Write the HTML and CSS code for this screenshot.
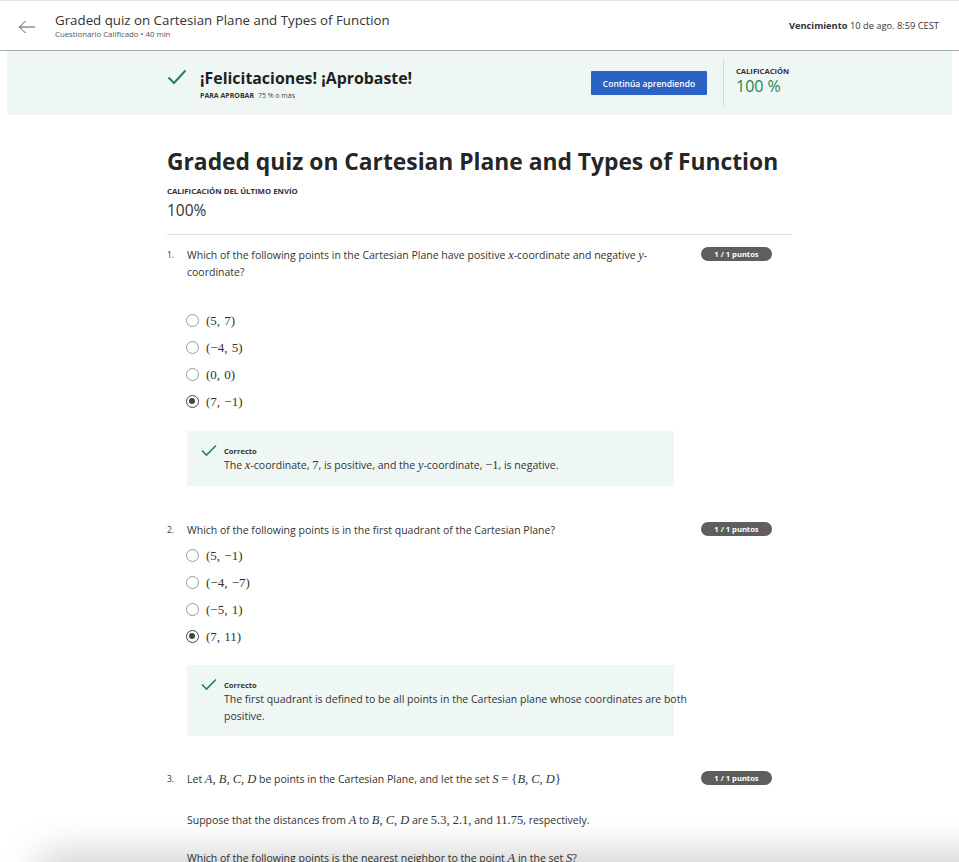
FILE: index.html
```html
<!DOCTYPE html>
<html lang="es">
<head>
<meta charset="utf-8">
<title>Graded quiz on Cartesian Plane and Types of Function</title>
<link rel="stylesheet" href="styles.css">
</head>
<body>
<header class="topbar">
  <svg class="back" width="18" height="14" viewBox="0 0 18 14"><path d="M17 7H1.5M7.5 1L1.5 7l6 6" fill="none" stroke="#555" stroke-width="1"/></svg>
  <div class="titles">
    <div class="t-main">Graded quiz on Cartesian Plane and Types of Function</div>
    <div class="t-sub">Cuestionario Calificado • 40 min</div>
  </div>
  <div class="due"><b>Vencimiento</b> 10 de ago. 8:59 CEST</div>
</header>

<section class="banner">
  <div class="banner-in">
    <svg class="bcheck" width="20" height="16" viewBox="0 0 20 16"><path d="M1.5 8.5l5.5 5.5L18.5 1.5" fill="none" stroke="#1f8354" stroke-width="2"/></svg>
    <div class="congrats">
      <div class="c-title">¡Felicitaciones! ¡Aprobaste!</div>
      <div class="c-sub"><b>PARA APROBAR</b> 75 % o más</div>
    </div>
    <button class="cta">Continúa aprendiendo</button>
    <div class="score">
      <div class="s-label">CALIFICACIÓN</div>
      <div class="s-val">100 %</div>
    </div>
  </div>
</section>

<main class="content">
  <h1 class="quiz-title">Graded quiz on Cartesian Plane and Types of Function</h1>
  <div class="last-label">CALIFICACIÓN DEL ÚLTIMO ENVÍO</div>
  <div class="last-val">100%</div>
  <hr class="rule">

  <div class="q q1">
    <div class="q-head">
      <span class="q-num">1.</span>
      <div class="q-text">Which of the following points in the Cartesian Plane have positive <i class="m">x</i>-coordinate and negative <i class="m">y</i>-<br>coordinate?</div>
      <span class="badge">1 / 1 puntos</span>
    </div>
    <ul class="opts opts1">
      <li><span class="radio"></span><span class="m">(5, 7)</span></li>
      <li><span class="radio"></span><span class="m">(−4, 5)</span></li>
      <li><span class="radio"></span><span class="m">(0, 0)</span></li>
      <li><span class="radio on"></span><span class="m">(7, −1)</span></li>
    </ul>
    <div class="fb">
      <svg class="fcheck" width="16" height="13" viewBox="0 0 16 13"><path d="M1 6.5l4.5 4.5L15 1.5" fill="none" stroke="#1f8354" stroke-width="1.6"/></svg>
      <div>
        <div class="fb-title">Correcto</div>
        <div class="fb-text">The <i class="m">x</i>-coordinate, <span class="m">7</span>, is positive, and the <i class="m">y</i>-coordinate, <span class="m">−1</span>, is negative.</div>
      </div>
    </div>
  </div>

  <div class="q q2">
    <div class="q-head">
      <span class="q-num">2.</span>
      <div class="q-text">Which of the following points is in the first quadrant of the Cartesian Plane?</div>
      <span class="badge">1 / 1 puntos</span>
    </div>
    <ul class="opts opts2">
      <li><span class="radio"></span><span class="m">(5, −1)</span></li>
      <li><span class="radio"></span><span class="m">(−4, −7)</span></li>
      <li><span class="radio"></span><span class="m">(−5, 1)</span></li>
      <li><span class="radio on"></span><span class="m">(7, 11)</span></li>
    </ul>
    <div class="fb">
      <svg class="fcheck" width="16" height="13" viewBox="0 0 16 13"><path d="M1 6.5l4.5 4.5L15 1.5" fill="none" stroke="#1f8354" stroke-width="1.6"/></svg>
      <div>
        <div class="fb-title">Correcto</div>
        <div class="fb-text wide">The first quadrant is defined to be all points in the Cartesian plane whose coordinates are both positive.</div>
      </div>
    </div>
  </div>

  <div class="q q3">
    <div class="q-head">
      <span class="q-num">3.</span>
      <div class="q-text">Let <i class="m">A</i><span class="m">, </span><i class="m">B</i><span class="m">, </span><i class="m">C</i><span class="m">, </span><i class="m">D</i> be points in the Cartesian Plane, and let the set <i class="m">S</i> <span class="m">= {</span><i class="m">B</i><span class="m">, </span><i class="m">C</i><span class="m">, </span><i class="m">D</i><span class="m">}</span></div>
      <span class="badge">1 / 1 puntos</span>
    </div>
    <p class="q-p">Suppose that the distances from <i class="m">A</i> to <i class="m">B</i><span class="m">, </span><i class="m">C</i><span class="m">, </span><i class="m">D</i> are <span class="m">5.3, 2.1,</span> and <span class="m">11.75</span>, respectively.</p>
    <p class="q-p">Which of the following points is the nearest neighbor to the point <i class="m">A</i> in the set <i class="m">S</i>?</p>
  </div>
</main>
<div class="footshade"></div>
</body>
</html>
```
FILE: styles.css
```css
* { box-sizing: border-box; }
body {
  margin: 0;
  font-family: "Open Sans", "Noto Sans", sans-serif;
  color: #1f1f1f;
  background: #fff;
  overflow: hidden;
  height: 862px;
}
.m { font-family: "Liberation Serif", "DejaVu Serif", serif; font-size: 12.5px; }
i.m { font-style: italic; }

.topbar {
  height: 51px;
  border-top: 1px solid #e3e3e3;
  border-bottom: 1px solid #ababab;
  display: flex;
  align-items: center;
  padding: 0 20px 0 18px;
}
.back { display: block; margin-top: 2px; }
.titles { margin-left: 19px; margin-top: -2px; }
.t-main { font-size: 13.3px; line-height: 18px; color: #333; }
.t-sub { font-size: 7.8px; line-height: 10px; color: #555; }
.due { margin-left: auto; font-size: 9.3px; color: #333; margin-top: -1px; }
.due b { font-weight: 700; }

.banner {
  margin: 0 7px;
  height: 64px;
  background: #eff7f4;
}
.banner-in {
  width: 625px;
  margin: 0 auto;
  height: 100%;
  display: flex;
  align-items: center;
}
.bcheck { margin-top: -13px; }
.congrats { margin-left: 13px; margin-top: 1px; }
.c-title { font-size: 15.9px; font-weight: 700; color: #1f1f1f; line-height: 20px; }
.c-sub { font-size: 7px; color: #444; margin-top: 3px; }
.c-sub b { font-weight: 700; color: #333; margin-right: 2px; }
.cta {
  margin-left: auto;
  width: 116px;
  height: 24px;
  background: #2a63c4;
  color: #fff;
  border: 0;
  border-radius: 1px;
  font-family: inherit;
  font-size: 8.5px;
  font-weight: 600;
  padding: 0;
}
.score {
  margin-left: 16px;
  height: 48px;
  width: 69px;
  border-left: 1px solid #d6d6d6;
  padding-left: 12px;
  padding-top: 7px;
}
.s-label { font-size: 7.6px; font-weight: 700; color: #333; line-height: 10px; }
.s-val { font-size: 16px; color: #1f8354; line-height: 20px; }

.content {
  width: 625px;
  margin: 0 auto;
}
.quiz-title {
  margin: 32px 0 0;
  font-size: 22.8px;
  font-weight: 700;
  line-height: 30px;
  color: #262626;
}
.last-label { font-size: 7.8px; font-weight: 700; color: #333; margin-top: 9px; line-height: 10px; }
.last-val { font-size: 15.5px; color: #333; margin-top: 4px; line-height: 20px; }
.rule { border: 0; border-top: 1px solid #dcdcdc; margin: 14px 0 0; }

.q-head { display: flex; align-items: flex-start; }
.q-num { width: 20px; font-size: 8.5px; color: #333; line-height: 15px; }
.q-text { font-size: 10.5px; line-height: 17px; color: #333; width: 500px; }
.badge {
  margin-left: auto;
  margin-right: 20px;
  margin-top: 0;
  width: 71px;
  height: 14px;
  border-radius: 7px;
  background: #5e5e5e;
  color: #fff;
  font-size: 7.6px;
  font-weight: 700;
  text-align: center;
  line-height: 14px;
  flex-shrink: 0;
}
.q1 { margin-top: 12px; }
.opts { list-style: none; margin: 0; padding: 0 0 0 19px; }
.opts1 { margin-top: 26px; }
.opts2 { margin-top: 3px; }
.opts li { display: flex; align-items: center; height: 27px; }
.opts .m { font-size: 13px; color: #333; word-spacing: 1px; }
.radio {
  width: 13px; height: 13px;
  border: 1px solid #9b9b9b;
  border-radius: 50%;
  margin-right: 7px;
  position: relative;
  flex-shrink: 0;
}
.radio.on { border: 1.5px solid #444; }
.radio.on::after {
  content: "";
  position: absolute;
  left: 2px; top: 2px;
  width: 6px; height: 6px;
  border-radius: 50%;
  background: #444;
}
.fb {
  margin: 16px 0 0 20px;
  width: 487px;
  background: #eff7f4;
  display: flex;
  padding: 13px 10px 12px 14px;
}
.fcheck { margin-right: 7px; flex-shrink: 0; }
.fb-title { font-size: 7.6px; font-weight: 700; color: #333; line-height: 10px; margin-top: 2px; }
.fb-text { font-size: 10.5px; color: #333; line-height: 17px; margin-top: 1px; }
.fb-text.wide { width: 475px; }
.fb-text .m { font-size: 12.5px; }
.q2 { margin-top: 36px; }
.q2 .fb { padding-bottom: 11px; margin-top: 15px; }
.q3 { margin-top: 35px; }
.q-p { margin: 24px 0 0 20px; font-size: 10.5px; line-height: 17px; color: #333; }
.q-p + .q-p { margin-top: 21px; }

.footshade {
  position: fixed;
  left: 40px; right: -40px;
  bottom: -40px;
  height: 40px;
  background: #fff;
  box-shadow: 0 -6px 40px rgba(0,0,0,0.22);
}
```
